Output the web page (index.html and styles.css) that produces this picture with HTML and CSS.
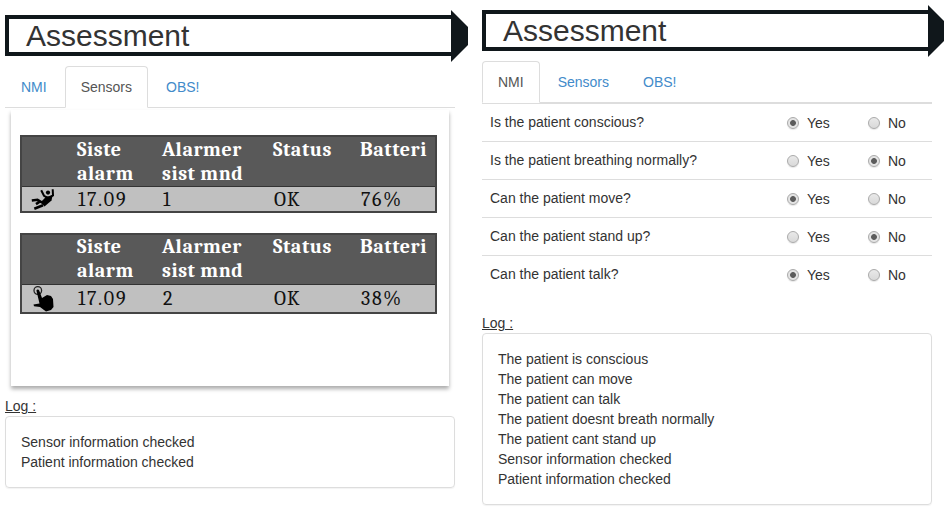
FILE: index.html
```html
<!DOCTYPE html>
<html lang="en">
<head>
<meta charset="utf-8">
<title>Assessment</title>
<link rel="stylesheet" href="styles.css">
</head>
<body>
<main class="views">
  <section class="view view-sensors">
    <header class="banner"><h1>Assessment</h1><svg class="tip" viewBox="0 0 17 52"><path d="M0 0L17 17V35L0 52Z"/></svg></header>
    <nav class="tabs"><a>NMI</a><a class="active">Sensors</a><a>OBS!</a></nav>
    <div class="card">
      <table class="sensor">
        <thead><tr><th></th><th>Siste<br>alarm</th><th>Alarmer<br>sist mnd</th><th>Status</th><th>Batteri</th></tr></thead>
        <tbody><tr><td class="icon"><svg class="fall" viewBox="0 0 24 24"><circle cx="17" cy="5.6" r="2.1"/><path d="M10.2 3.3L13 8.8L17 11L22 8.5L21.7 2.3" class="limb"/><path d="M15 9.8L21.5 9L20.5 13.5L13.5 19.5L9.5 15.5Z"/><path d="M11 15.5L6.5 12.8L0.8 13.5M12 18.3L3.3 21.8M9 14.5L5 17.2" class="limb thick"/></svg></td><td>17.09</td><td>1</td><td class="word">OK</td><td>76%</td></tr></tbody>
      </table>
      <table class="sensor second">
        <thead><tr><th></th><th>Siste<br>alarm</th><th>Alarmer<br>sist mnd</th><th>Status</th><th>Batteri</th></tr></thead>
        <tbody><tr><td class="icon"><svg class="touch" viewBox="0 0 24 26"><circle cx="6.8" cy="4.5" r="3.8" class="ring"/><path d="M5.4 4.5C6 3.1 7.8 3.3 8.2 4.5L11 12L16 9L20 10L22 13L22.5 21L20 24L15 25.5L9 21L3 20.3L2.5 18.4L8.5 17.5Z"/></svg></td><td>17.09</td><td>2</td><td class="word">OK</td><td>38%</td></tr></tbody>
      </table>
    </div>
    <h2 class="log-title">Log :</h2>
    <div class="log">Sensor information checked<br>Patient information checked</div>
  </section>
  <section class="view view-nmi">
    <header class="banner"><h1>Assessment</h1><svg class="tip" viewBox="0 0 17 52"><path d="M0 0L17 17V35L0 52Z"/></svg></header>
    <nav class="tabs"><a class="active">NMI</a><a>Sensors</a><a>OBS!</a></nav>
    <div class="questions">
      <div class="row"><span class="q">Is the patient conscious?</span><label><i class="radio on"></i>Yes</label><label><i class="radio"></i>No</label></div>
      <div class="row"><span class="q">Is the patient breathing normally?</span><label><i class="radio"></i>Yes</label><label><i class="radio on"></i>No</label></div>
      <div class="row"><span class="q">Can the patient move?</span><label><i class="radio on"></i>Yes</label><label><i class="radio"></i>No</label></div>
      <div class="row"><span class="q">Can the patient stand up?</span><label><i class="radio"></i>Yes</label><label><i class="radio on"></i>No</label></div>
      <div class="row"><span class="q">Can the patient talk?</span><label><i class="radio on"></i>Yes</label><label><i class="radio"></i>No</label></div>
    </div>
    <h2 class="log-title">Log :</h2>
    <div class="log">The patient is conscious<br>The patient can move<br>The patient can talk<br>The patient doesnt breath normally<br>The patient cant stand up<br>Sensor information checked<br>Patient information checked</div>
  </section>
</main>
</body>
</html>
```
FILE: styles.css
```css
* { box-sizing: border-box; }
body { margin: 0; background: #fff; color: #333; font: 14px/20px "Liberation Sans", Arial, sans-serif; overflow: hidden; }
.views { display: flex; gap: 14px; padding-left: 5px; height: 514px; }
.view { width: 463px; flex: none; }
.view-sensors { padding-top: 10px; }
.view-nmi { padding-top: 5px; }
.banner { display: flex; align-items: flex-start; height: 52px; }
.banner h1 { width: 446px; height: 41px; margin: 5px 0 0; padding-left: 17px; border: 4px solid #10171b; border-right: 0; font-size: 30px; font-weight: 400; line-height: 33px; }
.tip { width: 17px; height: 52px; fill: #10171b; flex: none; }
.tabs { display: flex; gap: 2px; width: 450px; height: 42px; margin-top: 4px; border-bottom: 1px solid #ddd; }
.tabs a { height: 42px; padding: 10px 15px; border: 1px solid transparent; border-radius: 4px 4px 0 0; color: #428bca; }
.tabs .active { color: #555; background: #fff; border-color: #ddd; border-bottom-color: #fff; }
.card { width: 438px; height: 276px; margin: 2px 0 0 6px; padding: 25px 0 0 9px; box-shadow: 0 3px 4px rgba(0,0,0,.33); }
.sensor { width: 417px; height: 78px; table-layout: fixed; border-collapse: separate; border-spacing: 0; border: 2px solid #444; font: 20px/24px Cambria, Caladea, "Noto Serif", "Liberation Serif", serif; color: #111; background: #c0c0c0; }
.sensor th { height: 50px; padding: 1px 0 0; background: #595959; border-bottom: 1px solid #333; color: #fff; text-align: left; vertical-align: top; font-weight: 700; white-space: nowrap; letter-spacing: .55px; }
.sensor td { height: 24px; padding: 2px 0 0 1px; line-height: 22px; letter-spacing: 1.7px; }
.sensor td.word { letter-spacing: 1px; }
.sensor th:nth-child(1) { width: 55px; }
.sensor th:nth-child(2) { width: 85px; }
.sensor th:nth-child(3) { width: 111px; }
.sensor th:nth-child(4) { width: 87px; }
.sensor.second { height: 81px; margin-top: 20px; }
.sensor.second th { padding-top: 0; }
.sensor.second td { padding-top: 0; }
.sensor .icon { padding: 0; line-height: 0; }
.icon svg { display: block; margin-left: 9px; overflow: visible; }
.fall { width: 24px; height: 24px; }
.touch { width: 24px; height: 26px; }
.limb { fill: none; stroke: #000; stroke-width: 2; }
.thick { stroke-width: 2.6; }
.ring { fill: none; stroke: #222; stroke-width: 1.3; }
.log-title { width: 450px; height: 20px; margin: 10px 0 0; font-size: 14px; line-height: 20px; font-weight: 400; text-decoration: underline; }
.log { width: 450px; padding: 15px; border: 1px solid #ddd; border-radius: 4px; box-shadow: 0 1px 1px rgba(0,0,0,.05); }
.questions { width: 450px; }
.row { display: flex; height: 38px; padding: 8px; border-top: 1px solid #ddd; }
.q { width: 297px; }
.row label { display: flex; width: 81px; padding-top: 1px; }
.row label + label { width: 50px; }
.radio { width: 12px; height: 12px; margin: 4px 8px 0 0; border: 1px solid #aaa; border-radius: 50%; background: linear-gradient(#e9e9e9, #d9d9d9); box-shadow: 0 1px 1px rgba(0,0,0,.1); flex: none; }
.radio.on { background: radial-gradient(circle, #5c5c5c 0 2.5px, #e4e4e4 3.3px); }
.view-nmi .log-title { margin-top: 20px; }
```
